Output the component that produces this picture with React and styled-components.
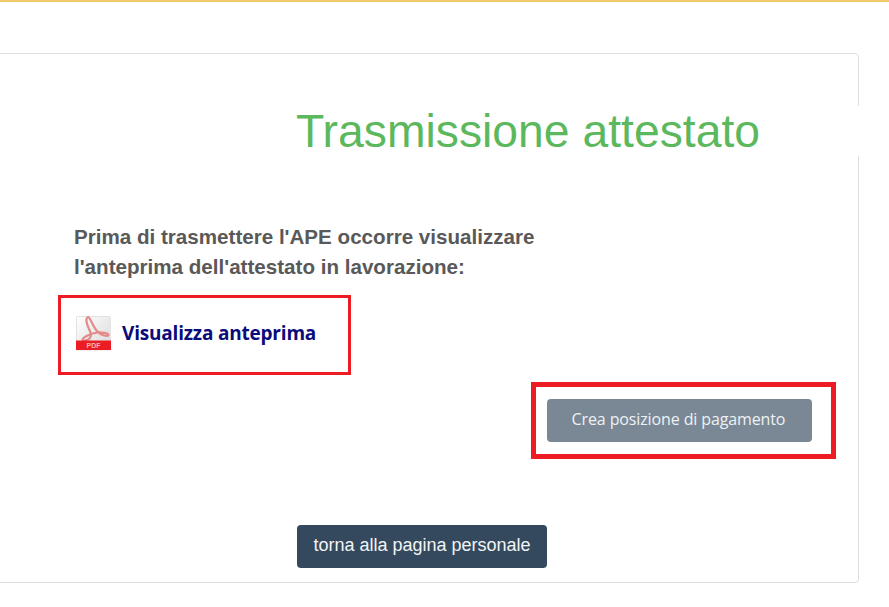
import React from "react";
import styled, { createGlobalStyle } from "styled-components";

const GlobalStyle = createGlobalStyle`
  html, body {
    margin: 0;
    padding: 0;
    background: #fff;
    overflow: hidden;
  }
`;

const Page = styled.div`
  width: 889px;
  height: 607px;
  overflow: hidden;
  border-top: 2px solid #f3c969;
  box-sizing: border-box;
  padding-top: 51px;
`;

const Card = styled.section`
  position: relative;
  box-sizing: border-box;
  width: 875px;
  height: 530px;
  margin-left: -16px;
  border: 1px solid #dfdfdf;
  border-radius: 4px;
  padding: 48px 0 0 89px;
  display: flex;
  flex-direction: column;
`;

const BorderGap = styled.div`
  position: absolute;
  right: -2px;
  top: 52px;
  width: 4px;
  height: 50px;
  background: #fff;
`;

const Title = styled.h1`
  margin: 0 0 0 222px;
  font: 400 46.3px/58px "Liberation Sans", Arial, sans-serif;
  color: #5cb85c;
  white-space: nowrap;
`;

const Intro = styled.p`
  margin: 62px 0 0;
  font: 700 20.6px/30px "Liberation Sans", Arial, sans-serif;
  color: #595959;
`;

const Highlight = styled.div`
  box-sizing: border-box;
  border-style: solid;
  border-color: #ed1c24;
  border-width: ${(p) => p.$weight}px;
  display: flex;
  align-items: center;
`;

const PreviewBox = styled(Highlight)`
  width: 293px;
  height: 80px;
  margin: 13px 0 0 -16px;
  padding: 0 0 3px 15px;
  gap: 10px;
`;

const PreviewLink = styled.a`
  font: 700 19px/24px "Open Sans", "Noto Sans", sans-serif;
  letter-spacing: -0.2px;
  color: #0b0b7a;
  white-space: nowrap;
  margin-top: -2px;
`;

const PaymentBox = styled(Highlight)`
  width: 305px;
  height: 77px;
  margin: 7px 0 0 457px;
  padding-left: 11px;
`;

const Button = styled.button`
  border: 0;
  display: block;
  box-sizing: border-box;
  height: 43px;
  padding: 0 0 3px;
  border-radius: 4px;
  white-space: nowrap;
`;

const PaymentButton = styled(Button)`
  width: 265px;
  padding-right: 2px;
  background: #7a8896;
  color: #eef1f3;
  font: 400 16px/20px "Open Sans", "Noto Sans", sans-serif;
  letter-spacing: -0.12px;
`;

const BackButton = styled(Button)`
  width: 250px;
  margin: 66px 0 0 223px;
  background: #34495e;
  color: #f2f4f6;
  font: 400 18px/20px "Liberation Sans", Arial, sans-serif;
`;

function PdfIcon() {
  return (
    <svg width="36" height="36" viewBox="0 0 36 36" style={{ flex: "none" }}>
      <defs>
        <linearGradient id="sheet" x1="0" y1="0" x2="1" y2="1">
          <stop offset="0" stopColor="#ffffff" />
          <stop offset="1" stopColor="#d8d8d8" />
        </linearGradient>
      </defs>
      <rect x="0.5" y="0.5" width="34" height="33.5" rx="1" fill="url(#sheet)" stroke="#e2e2e2" />
      <path
        d="M12 1.500c-2.500 0 -2 5 1 11.500c2 4 3 6.500 .5 9.500c-1.500 2 -7 3 -7 1c0 -2 9 -6.500 15 -7c4 -.3 11 .5 11 2.500c0 2 -7.500 1 -12 -4.500c-4 -5 -6.500 -13.500 -8.500 -13.500z"
        fill="none"
        stroke="#e58a8a"
        strokeWidth="2.200"
      />
      <rect x="0" y="24.500" width="35" height="9.500" fill="#ec1c24" />
      <text
        x="17.500"
        y="32.300"
        textAnchor="middle"
        fontFamily="'Liberation Sans', Arial, sans-serif"
        fontSize="7"
        fontWeight="700"
        fill="#f6b5b5"
      >
        PDF
      </text>
    </svg>
  );
}

export default function App() {
  return (
    <>
      <GlobalStyle />
      <Page>
        <Card>
          <BorderGap />
          <Title>Trasmissione attestato</Title>
          <Intro>
            Prima di trasmettere l'APE occorre visualizzare
            <br />
            l'anteprima dell'attestato in lavorazione:
          </Intro>
          <PreviewBox $weight={3}>
            <PdfIcon />
            <PreviewLink>Visualizza anteprima</PreviewLink>
          </PreviewBox>
          <PaymentBox $weight={5}>
            <PaymentButton>Crea posizione di pagamento</PaymentButton>
          </PaymentBox>
          <BackButton>torna alla pagina personale</BackButton>
        </Card>
      </Page>
    </>
  );
}
